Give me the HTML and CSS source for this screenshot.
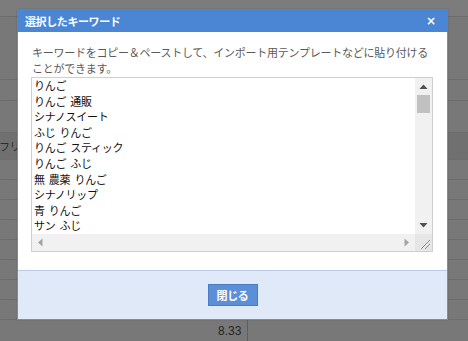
FILE: index.html
```html
<!DOCTYPE html>
<html lang="ja">
<head>
<meta charset="utf-8">
<title>選択したキーワード</title>
<link rel="stylesheet" href="styles.css">
</head>
<body>
<div class="page">
  <div class="row r-top"></div>
  <div class="row r-a"></div>
  <div class="row r-b"></div>
  <div class="row r-c"></div>
  <div class="row r-band"><span class="cell-left">フリ</span></div>
  <div class="row r-20"></div>
  <div class="row r-20"></div>
  <div class="row r-20"></div>
  <div class="row r-20"></div>
  <div class="row r-20"></div>
  <div class="row r-20"></div>
  <div class="row r-20"></div>
  <div class="row r-20"></div>
  <div class="row r-last"><span class="num">8.33</span><span class="vline"></span></div>
</div>

<div class="modal">
  <div class="modal-header">
    <span class="modal-title">選択したキーワード</span>
    <span class="modal-close">×</span>
  </div>
  <div class="modal-body">
    <p class="desc">キーワードをコピー＆ペーストして、インポート用テンプレートなどに貼り付けることができます。</p>
    <div class="textbox">
      <div class="lines">
        <div>りんご</div>
        <div>りんご 通販</div>
        <div>シナノスイート</div>
        <div>ふじ りんご</div>
        <div>りんご スティック</div>
        <div>りんご ふじ</div>
        <div>無 農薬 りんご</div>
        <div>シナノリップ</div>
        <div>青 りんご</div>
        <div>サン ふじ</div>
      </div>
      <div class="vscroll">
        <div class="sbtn"><svg width="17" height="17" viewBox="0 0 17 17"><path d="M4.5 11 L8.5 6.5 L12.5 11 Z" fill="#505050"/></svg></div>
        <div class="vtrack"><div class="thumb"></div></div>
        <div class="sbtn"><svg width="17" height="17" viewBox="0 0 17 17"><path d="M4.5 6 L8.5 10.5 L12.5 6 Z" fill="#505050"/></svg></div>
      </div>
      <div class="hscroll">
        <div class="sbtn"><svg width="17" height="17" viewBox="0 0 17 17"><path d="M10.5 4.5 L6 8.5 L10.5 12.5 Z" fill="#a3a3a3"/></svg></div>
        <div class="htrack"></div>
        <div class="sbtn"><svg width="17" height="17" viewBox="0 0 17 17"><path d="M6.5 4.5 L11 8.5 L6.5 12.5 Z" fill="#a3a3a3"/></svg></div>
      </div>
      <div class="corner"><svg width="17" height="17" viewBox="0 0 17 17"><path d="M15 6 L6 15 M15 10 L10 15" stroke="#8a8a8a" stroke-width="1"/></svg></div>
    </div>
  </div>
  <div class="modal-footer">
    <button class="btn-close">閉じる</button>
  </div>
</div>
</body>
</html>
```

FILE: styles.css
```css
* { box-sizing: border-box; }
html, body { margin: 0; padding: 0; }
body {
  width: 468px;
  height: 341px;
  overflow: hidden;
  position: relative;
  background: #787878;
  font-family: "Noto Sans CJK JP", "Noto Sans", sans-serif;
}
.page {
  display: flex;
  flex-direction: column;
}
.row {
  border-bottom: 1px solid #6d6d6d;
  background: #787878;
  position: relative;
}
.r-top { height: 17px; background: #7c7c7c; }
.r-a { height: 63px; }
.r-b { height: 21px; }
.r-c { height: 32px; }
.r-band { height: 27px; background: #707070; display: flex; align-items: center; }
.r-20 { height: 20px; }
.r-last { height: 21px; border-bottom: none; display: flex; align-items: center; }
.cell-left {
  font-size: 11px;
  color: #2c2c2c;
  margin-left: -1px;
  letter-spacing: -0.5px;
}
.num {
  font-family: "Liberation Sans", sans-serif;
  font-size: 12px;
  color: #262626;
  margin-left: 218px;
  width: 26px;
}
.vline {
  align-self: stretch;
  width: 1px;
  background: #5e5e5e;
  margin-left: 3px;
}

.modal {
  position: absolute;
  left: 17px;
  top: 9px;
  width: 431px;
  height: 311px;
  border: 1px solid #6a8ed0;
  border-top: none;
  background: #fff;
  display: flex;
  flex-direction: column;
  box-shadow: 0 0 2px rgba(0,0,0,0.15);
}
.modal-header {
  height: 23px;
  margin: 0 -1px;
  background: #4a86d4;
  display: flex;
  align-items: center;
  justify-content: space-between;
  padding: 0 12px 0 8px;
  color: #fff;
}
.modal-title {
  font-size: 11px;
  font-weight: bold;
  letter-spacing: -0.4px;
}
.modal-close {
  font-family: "DejaVu Sans", sans-serif;
  font-size: 12px;
  font-weight: bold;
  line-height: 1;
}
.modal-body {
  flex: 1;
  padding: 12px 14px 0 13px;
}
.desc {
  margin: 0 0 0 1px;
  font-size: 11px;
  line-height: 16px;
  color: #5a5a5a;
  letter-spacing: -0.25px;
}
.textbox {
  margin-top: 1px;
  height: 175px;
  border: 1px solid #cfcfcf;
  display: grid;
  grid-template-columns: 1fr 17px;
  grid-template-rows: 1fr 17px;
  background: #fff;
}
.lines {
  overflow: hidden;
  padding: 0 2px;
  font-size: 11px;
  line-height: 15.6px;
  color: #111;
  letter-spacing: -0.3px;
  word-spacing: 2px;
}
.vscroll {
  background: #f1f1f1;
  display: flex;
  flex-direction: column;
}
.sbtn {
  width: 17px;
  height: 17px;
  flex: none;
}
.sbtn svg { display: block; }
.vtrack {
  flex: 1;
  padding: 0 2px;
}
.thumb {
  height: 18px;
  background: #c1c1c1;
}
.hscroll {
  background: #f1f1f1;
  display: flex;
}
.htrack { flex: 1; }
.corner {
  background: #e6e6e6;
}
.corner svg { display: block; }
.modal-footer {
  height: 49px;
  background: #dfe9f7;
  border-top: 1px solid #b8cbe6;
  display: flex;
  align-items: center;
  justify-content: center;
}
.btn-close {
  width: 50px;
  height: 22px;
  margin-top: -1px;
  padding: 0;
  border: 1px solid #4a7bc6;
  background: #5b90d8;
  color: #fff;
  font-family: "Noto Sans CJK JP", sans-serif;
  font-size: 11px;
  font-weight: bold;
  letter-spacing: -0.3px;
}
```
